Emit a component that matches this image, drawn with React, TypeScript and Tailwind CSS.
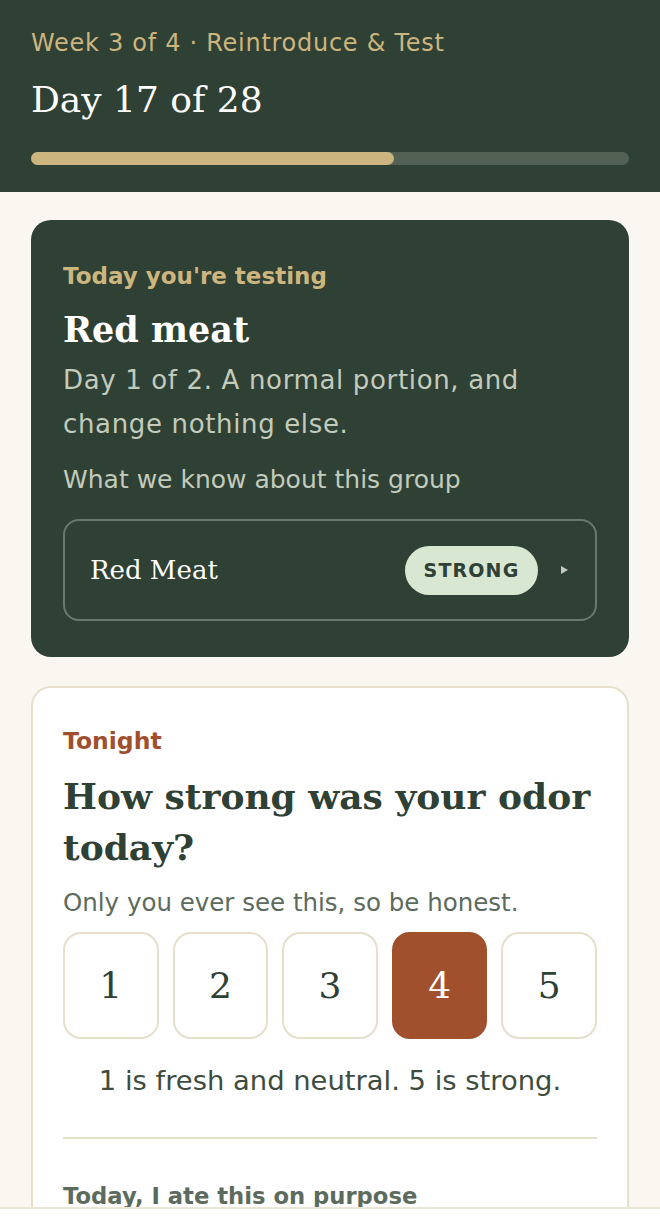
import React from "react";

const sans = { fontFamily: '"DejaVu Sans", "Noto Sans", sans-serif' };
const serif = { fontFamily: '"DejaVu Serif", "Liberation Serif", serif' };

export default function App() {
  const days = 17;
  const total = 28;
  const pct = (days / total) * 100;
  return (
    <div className="min-h-[1218px] bg-[#faf7f0]" style={sans}>
      <header className="bg-[#2f4034] px-[31px] pt-[27px] pb-[27px]">
        <div className="text-[24px] leading-[32px] tracking-[0.03em] text-[#cdb57f]">
          Week 3 of 4 · Reintroduce &amp; Test
        </div>
        <h1 className="mt-[17px] text-[36px] leading-[48px] text-white" style={serif}>
          Day 17 of 28
        </h1>
        <div className="mt-[28px] h-[13px] w-full rounded-full bg-[#536155]">
          <div className="h-full rounded-full bg-[#cdb57f]" style={{ width: `${pct}%` }} />
        </div>
      </header>

      <main className="px-[31px] pt-[28px]">
        <section className="rounded-[20px] bg-[#2f4034] px-[32px] pt-[40px] pb-[36px]">
          <div className="text-[23px] font-bold leading-[32px] text-[#cdb57f]">
            Today you're testing
          </div>
          <h2 className="mt-[16px] text-[35px] font-bold leading-[44px] text-white" style={serif}>
            Red meat
          </h2>
          <p className="mt-[6px] text-[26px] leading-[44px] tracking-[0.025em] text-[#c3cbbc]">
            Day 1 of 2. A normal portion, and change nothing else.
          </p>
          <div className="mt-[18px] text-[25px] leading-[32px] text-[#c3cbbc]">
            What we know about this group
          </div>
          <div className="mt-[23px] flex h-[102px] items-center rounded-[16px] border-2 border-[#6b796d] pl-[25px] pr-[26px]">
            <span className="flex-1 text-[26px] text-white" style={serif}>
              Red Meat
            </span>
            <span className="flex h-[49px] w-[133px] items-center justify-center rounded-full bg-[#d8e7d2] text-[19px] font-bold tracking-[0.06em] text-[#2f4034]">
              STRONG
            </span>
            <svg className="ml-[22px]" width="9" height="10" viewBox="0 0 9 10">
              <path d="M1 1 L8 5 L1 9 Z" fill="#c3cbbc" />
            </svg>
          </div>
        </section>

        <section className="mt-[29px] rounded-t-[20px] border-2 border-b-0 border-[#e6dfcc] bg-white px-[30px] pt-[37px] pb-[40px]">
          <div className="text-[23.5px] font-bold leading-[32px] text-[#a0502d]">Tonight</div>
          <h2 className="mt-[14px] text-[36px] font-bold leading-[51px] text-[#2f4034]" style={serif}>
            How strong was your odor today?
          </h2>
          <p className="mt-[14px] text-[24.5px] leading-[32px] text-[#5c6b5d]">
            Only you ever see this, so be honest.
          </p>
          <div className="mt-[13px] grid grid-cols-5 gap-[14px]">
            {[1, 2, 3, 4, 5].map((n) => (
              <button
                key={n}
                className={
                  n === 4
                    ? "flex h-[107px] items-center justify-center rounded-[18px] border-2 border-[#a0502d] bg-[#a0502d] text-[36px] text-white"
                    : "flex h-[107px] items-center justify-center rounded-[18px] border-2 border-[#e6dfcc] bg-white text-[36px] text-[#2f4034]"
                }
                style={serif}
              >
                {n}
              </button>
            ))}
          </div>
          <p className="mt-[26px] text-center text-[27.4px] leading-[32px] text-[#3e4c40]">
            1 is fresh and neutral. 5 is strong.
          </p>
          <div className="mt-[40px] h-[2px] bg-[#e6dfcc]" />
          <div className="mt-[41px] text-[22.7px] font-bold leading-[32px] text-[#5c6b5d]">
            Today, I ate this on purpose
          </div>
        </section>
      </main>

      <div className="fixed bottom-0 left-0 right-0 h-[11px] border-t-2 border-[#ece6d6] bg-white" />
    </div>
  );
}
